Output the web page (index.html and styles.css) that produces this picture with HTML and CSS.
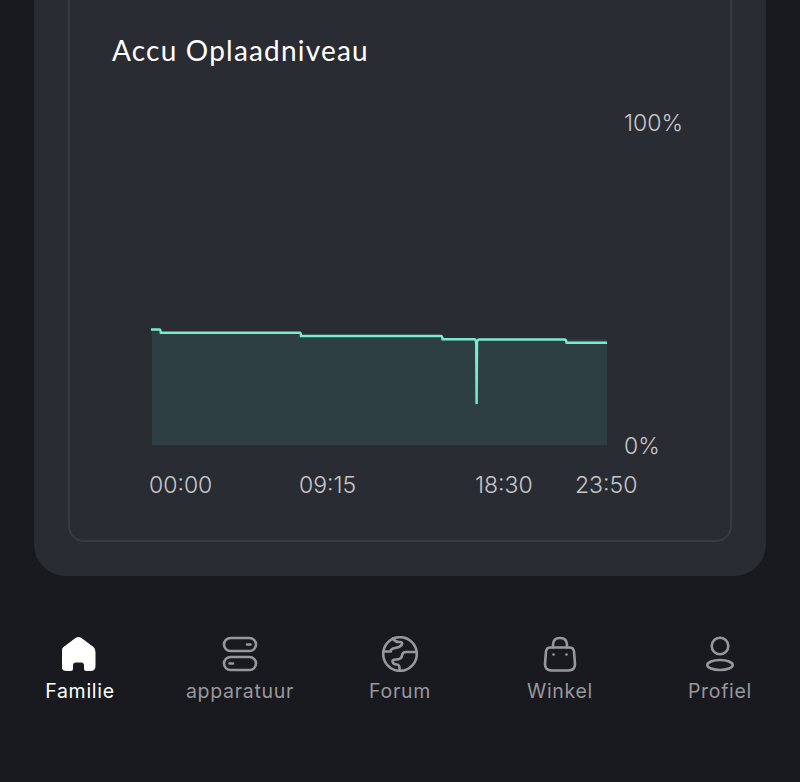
FILE: index.html
```html
<!DOCTYPE html>
<html lang="nl">
<head>
  <meta charset="UTF-8">
  <title>Accu Oplaadniveau</title>
  <link rel="stylesheet" href="styles.css">
</head>
<body>

<div class="card">
  <div class="panel">
    <h2 class="title">Accu Oplaadniveau</h2>

    <!-- grafiek met y-as rechts -->
    <div class="plot">
      <svg class="graph" width="460" height="351" viewBox="150 109 460 351">
        <path class="area" d="M152 330H160.5L161 332.7H300.5L301 336H442L443 339.3H607V445H152Z"/>
        <path class="line" d="M151 329.5H159.5Q160.5 329.5 160.8 332.7H300Q300.8 332.7 301 336H441Q442.3 336 442.6 339.3H474.5Q476 339.3 476.2 344L476.6 404L477 344Q477.2 339.5 479 339.5H564.5Q566.2 339.5 566.6 342.7H607"/>
      </svg>
      <div class="y-axis">
        <span>100%</span>
        <span>0%</span>
      </div>
    </div>

    <div class="x-axis">
      <span>00:00</span>
      <span>09:15</span>
      <span>18:30</span>
      <span>23:50</span>
    </div>
  </div>
</div>

<!-- onderste navigatie -->
<nav class="tabs">
  <div class="tab active">
    <svg class="icon" width="36" height="36" viewBox="1.5 0 36 36">
      <path class="solid" d="M15 2Q18 0 21 2L33 11Q35 12.8 35 16V30Q35 35 30 35H26Q23.5 35 23.5 32.5V29.5Q23.5 26.5 20.5 26.5H15.5Q12.5 26.5 12.5 29.5V32.5Q12.5 35 10 35H6Q1 35 1 30V16Q1 12.8 3 11Z"/>
    </svg>
    <span>Familie</span>
  </div>
  <div class="tab">
    <svg class="icon" width="36" height="36" viewBox="0 0 36 36">
      <rect x="2" y="2" width="32" height="13" rx="6.5"/>
      <rect x="2" y="21" width="32" height="13" rx="6.5"/>
      <path d="M25 8.5H28.5M7.5 27.5H11"/>
    </svg>
    <span>apparatuur</span>
  </div>
  <div class="tab">
    <svg class="icon" width="36" height="36" viewBox="0 0 36 36">
      <circle cx="18" cy="18" r="16.8"/>
      <path d="M11 2.5Q13 6 17 6Q21 5.5 20 8.5Q18 11.5 13 12Q9 12.5 8.5 15.5H1.5M34.5 16H24Q20.5 16 20 19.5Q19.5 23.5 14 23.5Q9 23.5 11 27Q12.5 28.5 15 28.5Q18 28.5 17.5 34.5"/>
    </svg>
    <span>Forum</span>
  </div>
  <div class="tab">
    <svg class="icon" width="36" height="36" viewBox="0 0 36 36">
      <path d="M8.5 11.5H27.5Q31.5 11.5 32 15.5L33 28Q33 34.5 26.5 34.5H9.5Q3 34.5 3 28L4 15.5Q4.5 11.5 8.5 11.5Z"/>
      <path d="M11 11.5V9Q11 2 18 2Q25 2 25 9V11.5"/>
      <circle class="dot" cx="11.5" cy="18.5" r="1.3"/>
      <circle class="dot" cx="24.5" cy="18.5" r="1.3"/>
    </svg>
    <span>Winkel</span>
  </div>
  <div class="tab">
    <svg class="icon" width="36" height="36" viewBox="0 0 36 36">
      <circle cx="18" cy="10" r="8.3"/>
      <ellipse cx="18" cy="29" rx="12.7" ry="5"/>
    </svg>
    <span>Profiel</span>
  </div>
</nav>

</body>
</html>
```

FILE: styles.css
```css
html, body {
  margin: 0;
  height: 782px;
  overflow: hidden;
  background-color: #191a1f;
}
.card {
  box-sizing: border-box;
  height: 576px;
  margin: 0 34px;
  padding: 0 34px 34px;
  background-color: #2a2c33;
  border-radius: 0 0 32px 32px;
}
.panel {
  box-sizing: border-box;
  height: 542px;
  padding: 33px 0 0 42px;
  border: 2px solid #3a3b42;
  border-top: none;
  border-radius: 0 0 16px 16px;
}
.title {
  margin: 0 0 42px;
  font-family: Lato, sans-serif;
  font-size: 28px;
  font-weight: 400;
  line-height: 34px;
  letter-spacing: 1.2px;
  color: #ffffff;
}
.plot {
  display: flex;
  gap: 14px;
  height: 351px;
  margin-left: 38px;
}
.graph {
  display: block;
  flex: none;
}
.area {
  fill: #2e3f43;
}
.line {
  fill: none;
  stroke: #78eccf;
  stroke-width: 2.4;
}
.y-axis {
  display: flex;
  flex-direction: column;
  justify-content: space-between;
  font-family: Inter, sans-serif;
  font-size: 23px;
  font-weight: 300;
  line-height: 28px;
  color: #c6c6ca;
}
.x-axis {
  display: grid;
  grid-template-columns: 150px 176px 100px auto;
  margin: 11px 0 0 37px;
  font-family: Inter, sans-serif;
  font-size: 23px;
  font-weight: 300;
  line-height: 28px;
  color: #c6c6ca;
}
.tabs {
  display: grid;
  grid-template-columns: repeat(5, 160px);
  margin-top: 60px;
}
.tab {
  display: flex;
  flex-direction: column;
  align-items: center;
  gap: 7px;
  font-family: Inter, sans-serif;
  font-size: 19.5px;
  line-height: 24px;
  letter-spacing: 0.7px;
  color: #98989c;
}
.tab.active {
  color: #ffffff;
}
.icon {
  display: block;
  fill: none;
  stroke: #98989c;
  stroke-width: 2.6;
  stroke-linecap: round;
}
.icon .solid {
  fill: #ffffff;
  stroke: none;
}
.icon .dot {
  fill: #98989c;
  stroke: none;
}
```
